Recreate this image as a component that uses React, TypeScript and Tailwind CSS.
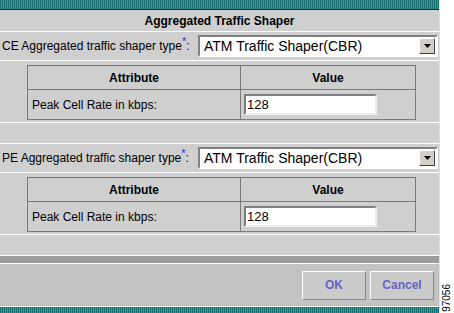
import React from 'react';

const teal =
  'bg-[repeating-linear-gradient(90deg,#176e6e_0px,#176e6e_1px,#3c9c9a_1px,#3c9c9a_2px)]';

const ShaperSelect = () => (
  <div className="flex h-[22px] w-[240px] items-center border-2 border-t-[#808080] border-l-[#808080] border-b-white border-r-white bg-white">
    <span className="flex-1 pl-[4px] text-[14px] leading-none text-black">ATM Traffic Shaper(CBR)</span>
    <div className="m-[1px] flex h-[16px] w-[16px] items-center justify-center border border-t-white border-l-white border-b-[#404040] border-r-[#404040] bg-[#d4d0c8]">
      <svg width="7" height="4" viewBox="0 0 7 4">
        <path d="M0 0h7L3.5 4z" fill="#000" />
      </svg>
    </div>
  </div>
);

const AttrTable = () => (
  <div className="flex h-[62px] border-t border-white pl-[27px] pt-[4px]">
    <div className="flex h-[55px] w-[389px] flex-col border border-[#7a7a7a]">
      <div className="flex h-[24px] border-b border-[#7a7a7a] text-[12px] font-bold text-black">
        <div className="flex w-[213px] items-center justify-center border-r border-[#7a7a7a]">Attribute</div>
        <div className="flex flex-1 items-center justify-center">Value</div>
      </div>
      <div className="flex flex-1 text-[12px] text-black">
        <div className="flex w-[213px] items-center border-r border-[#7a7a7a] pl-[4px]">Peak Cell Rate in kbps:</div>
        <div className="flex flex-1 items-center pl-[3px]">
          <div className="flex h-[21px] w-[133px] items-center border-2 border-t-[#808080] border-l-[#808080] border-b-[#eeeeee] border-r-[#eeeeee] bg-white pl-[1px] text-[13px]">
            128
          </div>
        </div>
      </div>
    </div>
  </div>
);

const TypeRow = ({ prefix }: { prefix: string }) => (
  <div className="flex h-[29px] items-center border-t border-white pl-[2px]">
    <span className="w-[196px] text-[12px] text-black">
      {prefix} Aggregated traffic shaper type
      <sup className="text-[11px] text-[#2c2cd0]">*</sup>:
    </span>
    <ShaperSelect />
  </div>
);

export default function App() {
  return (
    <div className="flex h-[313px] w-[454px] bg-white font-['Liberation_Sans',Arial,sans-serif]">
      <div className="flex w-[440px] flex-col border-r border-[#e0e0e0] bg-[#cfcfcf]">
        <div className={`h-[9px] ${teal}`} />
        <div className="h-px bg-[#202020]" />
        <div className="flex h-[21px] items-center justify-center text-[12px] font-bold text-black">
          Aggregated Traffic Shaper
        </div>
        <TypeRow prefix="CE" />
        <AttrTable />
        <div className="h-[21px] border-t border-white" />
        <TypeRow prefix="PE" />
        <AttrTable />
        <div className="h-[21px] border-t border-white" />
        <div className="h-[8px] border-t border-white bg-[#9d9b9c]" />
        <div className="flex h-[43px] items-center justify-end gap-[4px] border-t border-white bg-[#c4c3c4] pr-[5px]">
          <button className="h-[29px] w-[64px] border border-t-white border-l-white border-b-[#8a8a8a] border-r-[#8a8a8a] bg-[#cbcbcb] text-[12px] font-bold text-[#6464c8]">
            OK
          </button>
          <button className="h-[29px] w-[64px] border border-t-white border-l-white border-b-[#8a8a8a] border-r-[#8a8a8a] bg-[#cbcbcb] text-[12px] font-bold text-[#6464c8]">
            Cancel
          </button>
        </div>
        <div className={`flex-1 border-t border-white ${teal}`} />
      </div>
      <div className="flex flex-1 items-end justify-center pb-[1px]">
        <span className="rotate-180 text-[10px] leading-none text-black [writing-mode:vertical-rl]">97056</span>
      </div>
    </div>
  );
}
